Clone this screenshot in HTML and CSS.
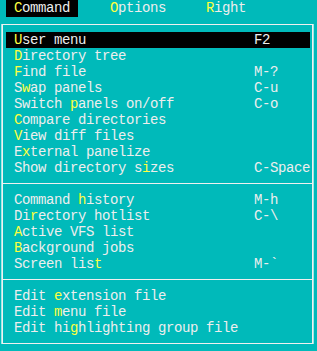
FILE: index.html
```html
<!DOCTYPE html>
<html>
<head>
<meta charset="utf-8">
<link rel="stylesheet" href="styles.css">
</head>
<body>
<div class="screen">
  <div class="menubar">
    <span class="mb-item active"><span class="hk">C</span>ommand</span>
    <span class="mb-item"><span class="hk">O</span>ptions</span>
    <span class="mb-item"><span class="hk">R</span>ight</span>
  </div>
  <div class="menu">
    <div class="row sel"><span class="label"><span class="hk">U</span>ser menu</span><span class="key">F2</span></div>
    <div class="row"><span class="label"><span class="hk">D</span>irectory tree</span><span class="key"></span></div>
    <div class="row"><span class="label"><span class="hk">F</span>ind file</span><span class="key">M-?</span></div>
    <div class="row"><span class="label">S<span class="hk">w</span>ap panels</span><span class="key">C-u</span></div>
    <div class="row"><span class="label">Switch <span class="hk">p</span>anels on/off</span><span class="key">C-o</span></div>
    <div class="row"><span class="label"><span class="hk">C</span>ompare directories</span><span class="key"></span></div>
    <div class="row"><span class="label"><span class="hk">V</span>iew diff files</span><span class="key"></span></div>
    <div class="row"><span class="label">E<span class="hk">x</span>ternal panelize</span><span class="key"></span></div>
    <div class="row"><span class="label">Show directory s<span class="hk">i</span>zes</span><span class="key">C-Space</span></div>
    <div class="sep"></div>
    <div class="row"><span class="label">Command <span class="hk">h</span>istory</span><span class="key">M-h</span></div>
    <div class="row"><span class="label">Di<span class="hk">r</span>ectory hotlist</span><span class="key">C-\</span></div>
    <div class="row"><span class="label"><span class="hk">A</span>ctive VFS list</span><span class="key"></span></div>
    <div class="row"><span class="label"><span class="hk">B</span>ackground jobs</span><span class="key"></span></div>
    <div class="row"><span class="label">Screen lis<span class="hk">t</span></span><span class="key">M-`</span></div>
    <div class="sep"></div>
    <div class="row"><span class="label">Edit <span class="hk">e</span>xtension file</span><span class="key"></span></div>
    <div class="row"><span class="label">Edit <span class="hk">m</span>enu file</span><span class="key"></span></div>
    <div class="row"><span class="label">Edit hi<span class="hk">g</span>hlighting group file</span><span class="key"></span></div>
  </div>
</div>
</body>
</html>
```

FILE: styles.css
```css
html, body {
  margin: 0;
  padding: 0;
  background: #00baba;
}

.screen {
  font-family: "Liberation Mono", "Courier New", monospace;
  font-size: 14px;
  letter-spacing: -0.4px;
  line-height: 16px;
  color: #eeeeee;
  width: 317px;
  height: 351px;
  overflow: hidden;
}

.label, .key, .mb-item {
  white-space: pre;
}

.hk {
  color: #ffff40;
}

.menubar {
  display: flex;
  gap: 24px;
  height: 16px;
  padding-left: 6px;
}

.mb-item {
  padding: 0 8px;
  height: 17px;
}

.mb-item.active {
  background: #000;
}

.menu {
  margin: 8px 0 0 2px;
  width: 304px;
  border: 1px solid #f0f0f0;
  box-shadow: -1px 0 0 #9fe6e6, 1px 0 0 #9fe6e6;
  padding: 7px 2px 7px 3px;
}

.row {
  display: flex;
  height: 16px;
  padding-left: 8px;
}

.row .label {
  width: 240px;
}

.row.sel {
  background: #000;
}

.sep {
  height: 16px;
  margin: 0 -2px 0 -3px;
}

.sep::before {
  content: "";
  display: block;
  height: 1px;
  background: #f0f0f0;
  transform: translateY(7px);
}
```
